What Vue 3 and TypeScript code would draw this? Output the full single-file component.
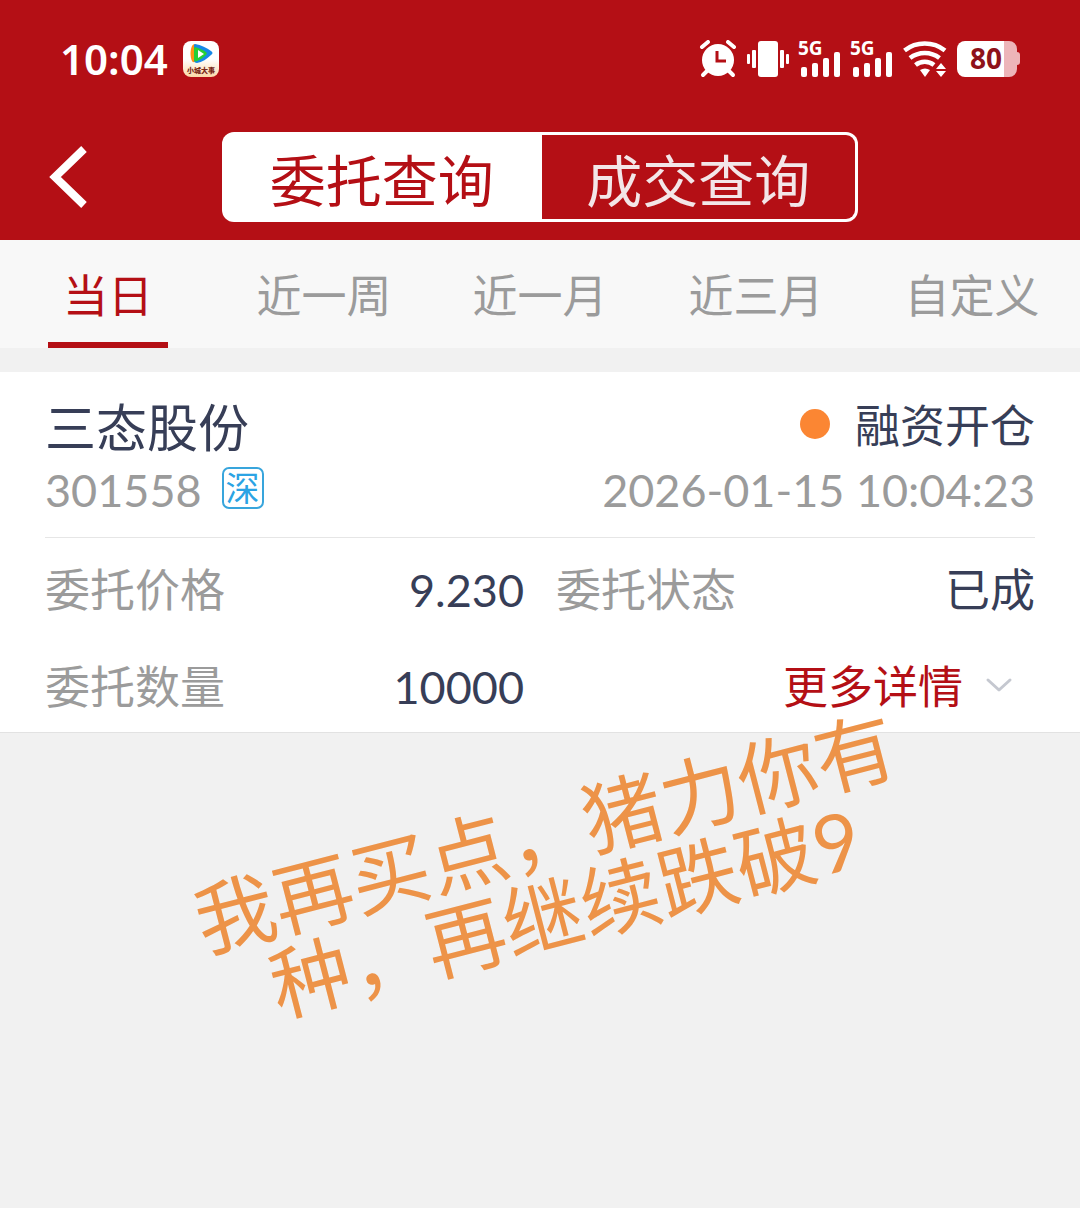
<script setup lang="ts">
import { ref } from 'vue'

const modes = ['委托查询', '成交查询']
const activeMode = ref(0)

const ranges = ['当日', '近一周', '近一月', '近三月', '自定义']
const activeRange = ref(0)

const order = {
  name: '三态股份',
  code: '301558',
  market: '深',
  kind: '融资开仓',
  time: '2026-01-15 10:04:23',
  price: '9.230',
  status: '已成',
  quantity: '10000',
}
</script>

<template>
  <div class="page">
    <header class="top">
      <div class="status">
        <span class="clock">10:04</span>
        <svg class="app-icon" width="36" height="36" viewBox="0 0 36 36" aria-hidden="true">
          <defs>
            <linearGradient id="tile" x1="0" y1="0" x2="0" y2="1">
              <stop offset="0.5" stop-color="#fff" />
              <stop offset="1" stop-color="#fbd9a8" />
            </linearGradient>
          </defs>
          <rect width="36" height="36" rx="8" fill="url(#tile)" />
          <path d="M9 5c-2 4-2 11 0 15 1 2 3 1 5 0V4c-2-1-4-1-5 1z" fill="#ff9215" />
          <path d="M12 3c6 1 12 4 16 7 2 1 2 3 0 4-4 4-9 7-14 8-2 0-3-1-3-3V5c0-1 0-2 1-2z" fill="#1688e8" />
          <path d="M12 6c4 1 8 3 11 5 1 1 1 2 0 3-3 3-6 5-9 6-2 1-3 0-3-2V8c0-1 0-2 1-2z" fill="#25cf35" />
          <path d="M15 9l6 4-6 4z" fill="#fff" />
          <text x="18" y="32" text-anchor="middle" class="app-name">小城大事</text>
        </svg>
        <div class="indicators">
          <svg width="38" height="38" viewBox="0 0 38 38" aria-hidden="true">
            <circle cx="19" cy="20" r="16" fill="#fff" />
            <path d="M3 7l6-5M35 7l-6-5" stroke="#fff" stroke-width="4" stroke-linecap="round" />
            <path d="M8 31l-4 4M30 31l4 4" stroke="#fff" stroke-width="4" stroke-linecap="round" />
            <path d="M18 11v10h9" fill="none" stroke="#b40f15" stroke-width="3" />
          </svg>
          <svg width="42" height="38" viewBox="0 0 42 38" fill="#fff" aria-hidden="true">
            <rect x="11" y="1" width="20" height="36" rx="3" />
            <rect x="5" y="10" width="4" height="18" rx="1" />
            <rect x="0" y="14" width="3" height="10" rx="1" />
            <rect x="33" y="10" width="4" height="18" rx="1" />
            <rect x="39" y="14" width="3" height="10" rx="1" />
          </svg>
          <svg v-for="sim in 2" :key="sim" class="signal" width="42" height="38" viewBox="0 0 42 38" fill="#fff" aria-hidden="true">
            <text x="-1" y="15" class="net">5G</text>
            <rect x="2" y="27" width="6" height="10" rx="2" />
            <rect x="13" y="23" width="6" height="14" rx="2" />
            <rect x="24" y="18" width="6" height="19" rx="2" />
            <rect x="35" y="12" width="6" height="25" rx="2" />
          </svg>
          <svg width="44" height="38" viewBox="0 0 44 38" aria-hidden="true">
            <g fill="none" stroke="#fff" stroke-width="4.6">
              <path d="M1.500 10.500a33 33 0 0 1 40.500 0" />
              <path d="M7 18a24 24 0 0 1 29.500 0" />
              <path d="M12.500 25a15 15 0 0 1 18.500 0" />
            </g>
            <path d="M17 30q5-3 10 0l-5 7z" fill="#fff" />
            <path d="M38 23l5 6H33zM33 31h10l-5 6z" fill="#fff" />
          </svg>
          <svg width="63" height="38" viewBox="0 0 63 38" aria-hidden="true">
            <path d="M47 1h5a8 8 0 0 1 8 8v3a3 3 0 0 1 3 3v7a3 3 0 0 1-3 3v4a8 8 0 0 1-8 8h-5z" fill="#edb5b9" />
            <path d="M8 1h39v36H8a8 8 0 0 1-8-8V9a8 8 0 0 1 8-8z" fill="#fff" />
            <text x="29" y="29" text-anchor="middle" class="charge">80</text>
          </svg>
        </div>
      </div>

      <div class="nav">
        <button class="back" type="button" aria-label="返回">
          <svg width="40" height="64" viewBox="0 0 40 64" aria-hidden="true">
            <path d="M36 4L7 32l29 28" fill="none" stroke="#fff" stroke-width="8" />
          </svg>
        </button>
        <div class="segment">
          <button
            v-for="(mode, i) in modes"
            :key="mode"
            type="button"
            :class="{ on: i === activeMode }"
            @click="activeMode = i"
          >{{ mode }}</button>
        </div>
      </div>
    </header>

    <nav class="ranges">
      <button
        v-for="(range, i) in ranges"
        :key="range"
        type="button"
        :class="{ on: i === activeRange }"
        @click="activeRange = i"
      >{{ range }}</button>
    </nav>

    <main class="card">
      <div class="summary">
        <div class="line">
          <h1>{{ order.name }}</h1>
          <span class="kind"><i class="dot"></i>{{ order.kind }}</span>
        </div>
        <div class="line muted">
          <span class="code">{{ order.code }}<span class="market">{{ order.market }}</span></span>
          <time>{{ order.time }}</time>
        </div>
      </div>
      <dl class="fields">
        <div class="field"><dt>委托价格</dt><dd>{{ order.price }}</dd></div>
        <div class="field"><dt>委托状态</dt><dd>{{ order.status }}</dd></div>
        <div class="field"><dt>委托数量</dt><dd>{{ order.quantity }}</dd></div>
        <div class="action">
          <button class="more" type="button">
            更多详情
            <svg width="28" height="20" viewBox="0 0 28 20" aria-hidden="true">
              <path d="M3 3l11 10 11-10" fill="none" stroke="#c5c8d0" stroke-width="3" stroke-linecap="round" stroke-linejoin="round" />
            </svg>
          </button>
        </div>
      </dl>
    </main>

    <p class="note">我再买点，猪力你有<br>种，再继续跌破9</p>
  </div>
</template>

<style>
body {
  margin: 0;
  background: #f1f1f1;
}
</style>

<style scoped>
.page {
  position: relative;
  min-height: 100vh;
  overflow: hidden;
  background: #f1f1f1;
  color: #373e57;
  font-family: Lato, "Noto Sans CJK SC", sans-serif;
  font-size: 45px;
  line-height: 64px;
}

button {
  margin: 0;
  padding: 0;
  border: 0;
  background: none;
  color: inherit;
  font: inherit;
  cursor: pointer;
}

svg {
  display: block;
  flex: none;
}

.top {
  background: #b40f15;
  color: #fff;
}

.status {
  display: flex;
  align-items: center;
  height: 118px;
  padding: 0 60px;
}

.clock {
  font-family: "Noto Sans", sans-serif;
  font-size: 42px;
  font-weight: 600;
}

.app-icon {
  margin-left: 15px;
}

.app-name {
  font-family: "Noto Sans CJK SC", sans-serif;
  font-size: 7px;
  font-weight: 900;
  fill: #7a2a18;
}

.indicators {
  display: flex;
  gap: 10px;
  margin-left: auto;
}

.signal {
  overflow: visible;
}

.net {
  font-family: "Noto Sans", sans-serif;
  font-size: 19px;
  font-weight: 700;
}

.charge {
  font-family: "Noto Sans", sans-serif;
  font-size: 28px;
  font-weight: 700;
  fill: #8e1219;
}

.nav {
  display: grid;
  grid-template-columns: 222px 1fr 222px;
  padding: 14px 0 18px;
}

.back {
  display: flex;
  align-items: center;
  padding-left: 48px;
}

.segment {
  display: flex;
  gap: 3px;
  padding: 3px;
  border-radius: 12px;
  background: #fff;
}

.segment button {
  flex: 1;
  height: 84px;
  padding-top: 8px;
  background: #b40f15;
  color: #f3e6e8;
  font-size: 56px;
  line-height: 76px;
}

.segment button:first-child {
  border-radius: 9px 0 0 9px;
}

.segment button:last-child {
  border-radius: 0 9px 9px 0;
}

.segment .on {
  background: #fff;
  color: #b40f15;
}

.ranges {
  display: grid;
  grid-template-columns: repeat(5, 1fr);
  background: #f8f8f8;
  color: #9b9b9b;
}

.ranges button {
  display: flex;
  flex-direction: column;
  align-items: center;
  padding-top: 24px;
}

.ranges button::after {
  content: "";
  width: 120px;
  height: 6px;
  margin-top: 14px;
}

.ranges .on {
  color: #b40f15;
}

.ranges .on::after {
  background: #b40f15;
}

.card {
  margin-top: 24px;
  padding: 0 45px;
  border-bottom: 1px solid #e2e2e2;
  background: #fff;
}

.summary {
  padding: 24px 0 17px;
  border-bottom: 1px solid #e6e6e6;
}

.line {
  display: flex;
  align-items: flex-start;
  justify-content: space-between;
}

h1 {
  margin: 0;
  font-size: 51px;
  font-weight: 400;
}

.kind,
.code {
  display: flex;
  align-items: center;
  line-height: 60px;
}

.dot {
  width: 30px;
  height: 30px;
  margin: 0 25px 4px 0;
  border-radius: 50%;
  background: #fb8633;
}

.muted,
dt {
  color: #9b9b9b;
}

.muted {
  line-height: 60px;
}

.market {
  width: 38px;
  height: 38px;
  margin: 0 0 4px 20px;
  border: 2px solid #38a5dc;
  border-radius: 7px;
  color: #2ba3e4;
  font-size: 34px;
  line-height: 38px;
  text-align: center;
}

.fields {
  display: grid;
  grid-template-columns: 1fr 1fr;
  gap: 33px 32px;
  margin: 0;
  padding: 20px 0 13px;
}

.field {
  display: flex;
  justify-content: space-between;
}

dd {
  margin: 0;
}

.action {
  display: flex;
  justify-content: flex-end;
}

.more {
  display: flex;
  align-items: center;
  gap: 22px;
  padding-right: 22px;
  color: #b40f15;
}

.note {
  position: absolute;
  top: 791px;
  left: 30px;
  right: 0;
  margin: 0;
  color: #ed9348;
  font-size: 80px;
  line-height: 81px;
  text-align: center;
  white-space: nowrap;
  transform: rotate(-14.5deg);
}
</style>
